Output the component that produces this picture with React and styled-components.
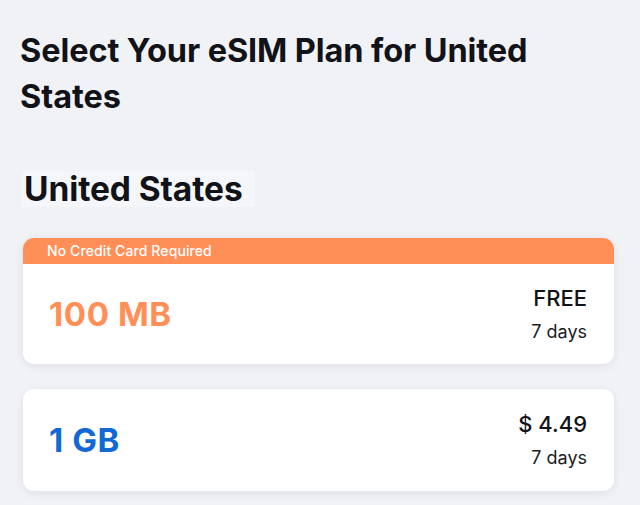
import React from "react";
import styled, { createGlobalStyle } from "styled-components";

const GlobalStyle = createGlobalStyle`
  html, body {
    margin: 0;
    padding: 0;
    background: #f1f2f6;
    font-family: Inter, "Noto Sans", sans-serif;
    color: #111318;
  }
`;

const Page = styled.div`
  width: 640px;
  height: 505px;
  overflow: hidden;
  padding: 28px 26px 0 20px;
  box-sizing: border-box;
`;

const Title = styled.h1`
  margin: 0;
  font-size: 32.5px;
  line-height: 46px;
  font-weight: 700;
  letter-spacing: -0.1px;
  max-width: 540px;
`;

const Country = styled.h2`
  display: inline-block;
  margin: 51px 0 0 2px;
  padding: 0 12px 0 2px;
  font-size: 33.5px;
  line-height: 36px;
  font-weight: 700;
  letter-spacing: -0.1px;
  background: #f5f6f9;
`;

const List = styled.div`
  display: flex;
  flex-direction: column;
  gap: 25px;
  margin: 31px 0 0 3px;
`;

const Card = styled.div`
  background: #ffffff;
  border-radius: 11px;
  overflow: hidden;
  box-shadow: 0 2px 10px rgba(20, 30, 60, 0.08);
`;

const Badge = styled.div`
  background: #ff8f57;
  color: #ffffff;
  font-size: 14px;
  line-height: 26px;
  padding-left: 24px;
  font-weight: 500;
  letter-spacing: 0.1px;
`;

const Body = styled.div`
  display: flex;
  align-items: center;
  justify-content: space-between;
  height: ${(p) => p.$height}px;
  padding: 0 27px 0 26px;
`;

const Data = styled.div`
  font-size: 33px;
  font-weight: 700;
  letter-spacing: 0.6px;
  color: ${(p) => p.$color};
`;

const Price = styled.div`
  display: flex;
  flex-direction: column;
  align-items: flex-end;
  gap: 4px;
  margin-top: 1px;
`;

const Amount = styled.div`
  font-size: 22px;
  line-height: 30px;
  font-weight: 500;
`;

const Days = styled.div`
  font-size: 18px;
  line-height: 30px;
  color: #1a1c22;
`;

const plans = [
  { data: "100 MB", price: "FREE", days: "7 days", color: "#ff8f57", badge: "No Credit Card Required" },
  { data: "1 GB", price: "$ 4.49", days: "7 days", color: "#1269d3" },
];

export default function App() {
  return (
    <>
      <GlobalStyle />
      <Page>
        <Title>Select Your eSIM Plan for United States</Title>
        <Country>United States</Country>
        <List>
          {plans.map((plan) => (
            <Card key={plan.data}>
              {plan.badge && <Badge>{plan.badge}</Badge>}
              <Body $height={plan.badge ? 100 : 102}>
                <Data $color={plan.color}>{plan.data}</Data>
                <Price>
                  <Amount>{plan.price}</Amount>
                  <Days>{plan.days}</Days>
                </Price>
              </Body>
            </Card>
          ))}
        </List>
      </Page>
    </>
  );
}
